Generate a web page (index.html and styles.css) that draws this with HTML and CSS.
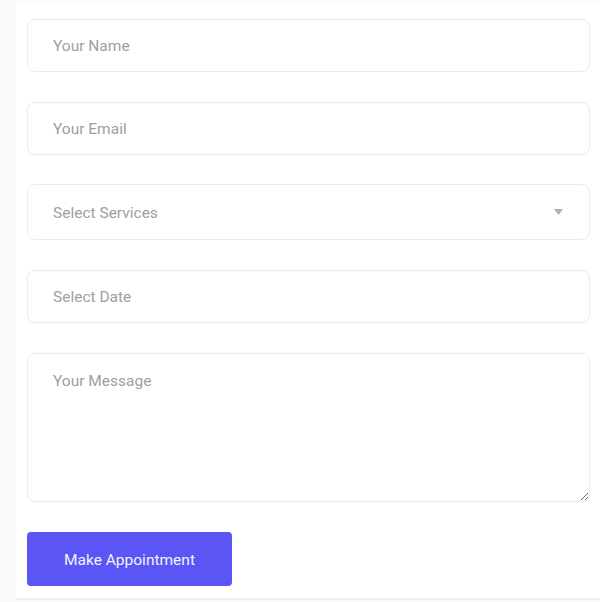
FILE: index.html
```html
<!DOCTYPE html>
<html>
<head>
<meta charset="utf-8">
<link rel="stylesheet" href="styles.css">
</head>
<body>
<div class="card">
  <form class="form">
    <div class="field"><input class="input" type="text" placeholder="Your Name"></div>
    <div class="field"><input class="input" type="text" placeholder="Your Email"></div>
    <div class="field select-wrap">
      <div class="input select">Select Services</div>
      <svg class="caret" width="9" height="6" viewBox="0 0 9 6"><path d="M0 0h9L4.5 6z" fill="#b0b0b0"/></svg>
    </div>
    <div class="field"><input class="input" type="text" placeholder="Select Date"></div>
    <div class="field"><textarea class="input area" placeholder="Your Message"></textarea></div>
    <div class="actions"><button class="btn" type="button">Make Appointment</button></div>
  </form>
</div>
</body>
</html>
```
FILE: styles.css
```css
html, body {
  margin: 0;
  padding: 0;
  background: #fafafa;
  font-family: Roboto, "Liberation Sans", sans-serif;
}
.card {
  margin: 3px 0 0 16px;
  background: #fff;
  border-bottom: 2px solid #f0f0f0;
  padding: 16px 10px 14px 11px;
  height: 597px;
  box-sizing: border-box;
}
.form {
  display: flex;
  flex-direction: column;
  gap: 30px;
}
.field {
  position: relative;
}
.input {
  display: block;
  width: 100%;
  box-sizing: border-box;
  height: 53px;
  border: 1px solid #ececec;
  border-radius: 8px;
  padding: 0 25px;
  font-family: inherit;
  font-size: 15.5px;
  color: #a0a0a0;
  background: #fff;
  outline: none;
}
.input::placeholder {
  color: #a0a0a0;
}
.select-wrap {
  margin-top: -1px;
}
.select {
  height: 56px;
  padding-top: 2px;
  display: flex;
  align-items: center;
}
.caret {
  position: absolute;
  right: 27px;
  top: 25px;
}
.area {
  height: 149px;
  padding-top: 17px;
  resize: vertical;
  line-height: 20px;
}
.actions {
  display: flex;
}
.btn {
  width: 205px;
  height: 54px;
  padding-top: 3px;
  background: #5a55f4;
  color: #f4f3ff;
  border: none;
  border-radius: 4px;
  font-family: inherit;
  font-size: 15.5px;
}
```
